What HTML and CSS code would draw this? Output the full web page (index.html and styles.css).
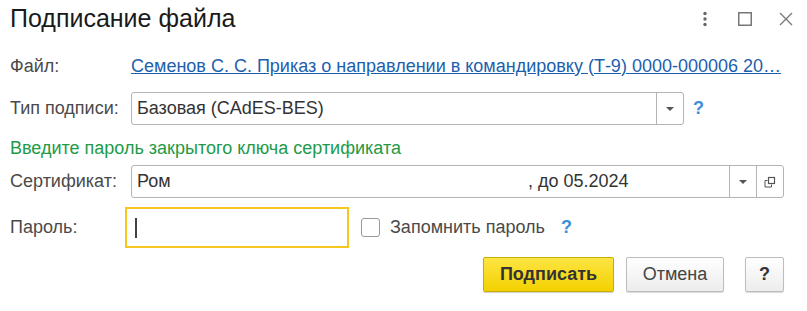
FILE: index.html
```html
<!DOCTYPE html>
<html lang="ru">
<head>
<meta charset="utf-8">
<title>Подписание файла</title>
<link rel="stylesheet" href="styles.css">
</head>
<body>
<div class="window">
  <div class="header">
    <div class="title">Подписание файла</div>
    <div class="win-tools">
      <svg class="tool" width="14" height="16" viewBox="0 0 14 16"><circle cx="7" cy="2.5" r="1.7" fill="#666"/><circle cx="7" cy="8" r="1.7" fill="#666"/><circle cx="7" cy="13.5" r="1.7" fill="#666"/></svg>
      <svg class="tool" width="16" height="16" viewBox="0 0 16 16"><rect x="1.75" y="1.75" width="12.5" height="12.5" fill="none" stroke="#777" stroke-width="1.5"/></svg>
      <svg class="tool" width="16" height="16" viewBox="0 0 16 16"><path d="M2 2 L14 14 M14 2 L2 14" stroke="#777" stroke-width="1.3"/></svg>
    </div>
  </div>
  <div class="form">
    <div class="row row-file">
      <div class="label">Файл:</div>
      <a class="link" href="#">Семенов С. С. Приказ о направлении в командировку (Т-9) 0000-000006 20…</a>
    </div>
    <div class="row row-type">
      <div class="label">Тип подписи:</div>
      <div class="field field-type">
        <div class="field-text">Базовая (CAdES-BES)</div>
        <div class="field-btn"><span class="tri"></span></div>
      </div>
      <span class="help">?</span>
    </div>
    <div class="hint">Введите пароль закрытого ключа сертификата</div>
    <div class="row row-cert">
      <div class="label">Сертификат:</div>
      <div class="field field-cert">
        <div class="field-text cert-text"><span class="cert-name">Ром</span><span class="cert-date">, до 05.2024</span></div>
        <div class="field-btn"><span class="tri"></span></div>
        <div class="field-btn">
          <svg width="12" height="12" viewBox="0 0 12 12"><path d="M1 4.5 V11 H7.5" fill="none" stroke="#555" stroke-width="1"/><path d="M1 4.5 H3.5 M7.5 11 V8.5" fill="none" stroke="#555" stroke-width="1"/><rect x="4.5" y="1.5" width="6" height="6" fill="none" stroke="#555" stroke-width="1.2"/></svg>
        </div>
      </div>
    </div>
    <div class="row row-pass">
      <div class="label label-pass">Пароль:</div>
      <div class="pass-input"><span class="caret"></span></div>
      <label class="check"><span class="box"></span><span>Запомнить пароль</span></label>
      <span class="help help-pass">?</span>
    </div>
    <div class="buttons">
      <button class="btn btn-primary">Подписать</button>
      <button class="btn btn-cancel">Отмена</button>
      <button class="btn btn-help">?</button>
    </div>
  </div>
</div>
</body>
</html>
```
FILE: styles.css
```css
html, body {
  margin: 0;
  padding: 0;
  background: #fff;
}
body {
  font-family: Arial, "Liberation Sans", sans-serif;
  font-size: 18px;
  color: #333;
}
.window {
  width: 807px;
  height: 311px;
  box-sizing: border-box;
}
.header {
  display: flex;
  align-items: center;
  height: 38px;
  padding: 0 13px 0 10px;
}
.title {
  flex: 1;
  font-size: 25px;
  color: #1a1a1a;
  line-height: 38px;
  padding-bottom: 2px;
}
.win-tools {
  display: flex;
  align-items: center;
  gap: 25px;
}
.tool { display: block; }
.form {
  padding: 0 23px 0 10px;
}
.row {
  display: flex;
  align-items: center;
}
.label {
  width: 121px;
  flex: none;
  color: #4a4a4a;
}
.row-file {
  margin-top: 12px;
  height: 32px;
}
.link {
  color: #1d5fae;
  text-decoration: underline;
  white-space: nowrap;
}
.row-type {
  margin-top: 10px;
}
.field {
  display: flex;
  height: 33px;
  box-sizing: border-box;
  border: 1px solid #b3b3b3;
  border-radius: 3px;
  background: #fff;
}
.field-type { width: 553px; }
.field-cert { width: 653px; }
.field-text {
  flex: 1;
  display: flex;
  align-items: center;
  padding-left: 5px;
  color: #333;
}
.cert-name {
  width: 391px;
}
.field-btn {
  width: 26px;
  border-left: 1px solid #b3b3b3;
  display: flex;
  align-items: center;
  justify-content: center;
}
.tri {
  width: 0;
  height: 0;
  border-left: 4px solid transparent;
  border-right: 4px solid transparent;
  border-top: 4px solid #555;
}
.help {
  color: #3a8fd9;
  font-weight: bold;
  font-size: 18px;
  margin-left: 9px;
}
.hint {
  margin-top: 12px;
  height: 22px;
  line-height: 22px;
  color: #1e9a48;
}
.row-cert {
  margin-top: 6px;
}
.row-pass {
  margin-top: 9px;
}
.label-pass {
  width: 115px;
}
.pass-input {
  width: 224px;
  height: 41px;
  box-sizing: border-box;
  border: 2px solid #f5c61e;
  display: flex;
  align-items: center;
  padding-left: 8px;
}
.caret {
  width: 2px;
  height: 20px;
  background: #444;
}
.check {
  display: flex;
  align-items: center;
  margin-left: 12px;
  color: #4a4a4a;
}
.box {
  width: 19px;
  height: 19px;
  box-sizing: border-box;
  border: 1px solid #9a9a9a;
  border-radius: 3px;
  margin-right: 10px;
  background: #fff;
}
.help-pass {
  margin-left: 16px;
}
.buttons {
  display: flex;
  justify-content: flex-end;
  gap: 12px;
  margin-top: 9px;
}
.btn {
  height: 35px;
  box-sizing: border-box;
  font-family: Arial, "Liberation Sans", sans-serif;
  font-size: 18px;
  border-radius: 2px;
  padding: 0;
  cursor: pointer;
}
.btn-primary {
  width: 131px;
  font-weight: bold;
  color: #333;
  background: linear-gradient(#fde543, #f3d100);
  border: 1px solid #c9ad00;
  box-shadow: 0 1px 1px rgba(0,0,0,0.2);
}
.btn-cancel {
  width: 98px;
  color: #444;
  background: linear-gradient(#ffffff, #ececec);
  border: 1px solid #bdbdbd;
  box-shadow: 0 1px 1px rgba(0,0,0,0.15);
}
.btn-help {
  width: 39px;
  margin-left: 9px;
  font-weight: bold;
  font-size: 18px;
  color: #333;
  background: linear-gradient(#ffffff, #ececec);
  border: 1px solid #bdbdbd;
  box-shadow: 0 1px 1px rgba(0,0,0,0.15);
}
```
